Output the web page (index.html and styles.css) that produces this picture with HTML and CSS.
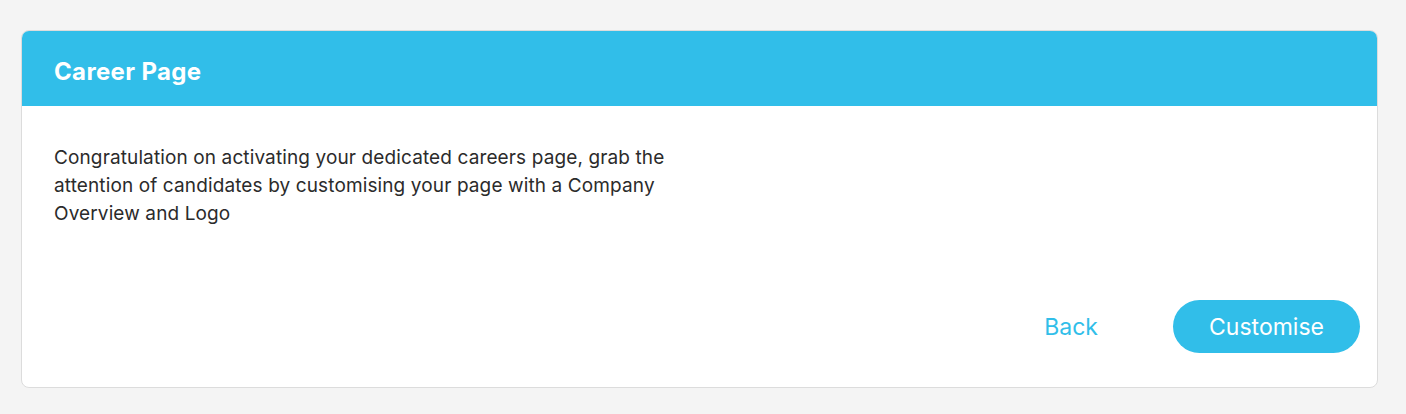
FILE: index.html
```html
<!DOCTYPE html>
<html lang="en">
<head>
<meta charset="utf-8">
<title>Career Page</title>
<link rel="stylesheet" href="styles.css">
</head>
<body>
<div class="page">
  <section class="card">
    <header class="card-header">
      <h1 class="card-title">Career Page</h1>
    </header>
    <div class="card-body">
      <p class="card-text">Congratulation on activating your dedicated careers page, grab the attention of candidates by customising your page with a Company Overview and Logo</p>
      <div class="card-actions">
        <button class="btn-link" type="button">Back</button>
        <button class="btn-primary" type="button">Customise</button>
      </div>
    </div>
  </section>
</div>
</body>
</html>
```

FILE: styles.css
```css
html, body {
  margin: 0;
  padding: 0;
  background: #f4f4f4;
  font-family: "Inter", "Liberation Sans", sans-serif;
}
.page {
  padding: 30px 28px 0 21px;
}
.card {
  background: #fff;
  border: 1px solid #dcdcdc;
  border-radius: 8px;
  overflow: hidden;
}
.card-header {
  background: #31bee9;
  height: 75px;
  box-sizing: border-box;
  display: flex;
  align-items: center;
  padding: 6px 32px 0;
}
.card-title {
  margin: 0;
  color: #fff;
  font-size: 24px;
  font-weight: 700;
  letter-spacing: 0.35px;
}
.card-body {
  padding: 38px 17px 34px 32px;
}
.card-text {
  margin: 0;
  max-width: 650px;
  color: #2b2b2b;
  font-size: 19px;
  line-height: 28px;
  letter-spacing: 0.12px;
}
.card-actions {
  margin-top: 72px;
  display: flex;
  justify-content: flex-end;
  align-items: center;
  gap: 75px;
}
.btn-link {
  background: none;
  border: none;
  padding: 0;
  color: #31bee9;
  font-family: inherit;
  font-size: 23px;
  cursor: pointer;
}
.btn-primary {
  background: #31bee9;
  border: none;
  color: #fff;
  font-family: inherit;
  font-size: 23px;
  height: 53px;
  width: 187px;
  border-radius: 27px;
  cursor: pointer;
}
```
